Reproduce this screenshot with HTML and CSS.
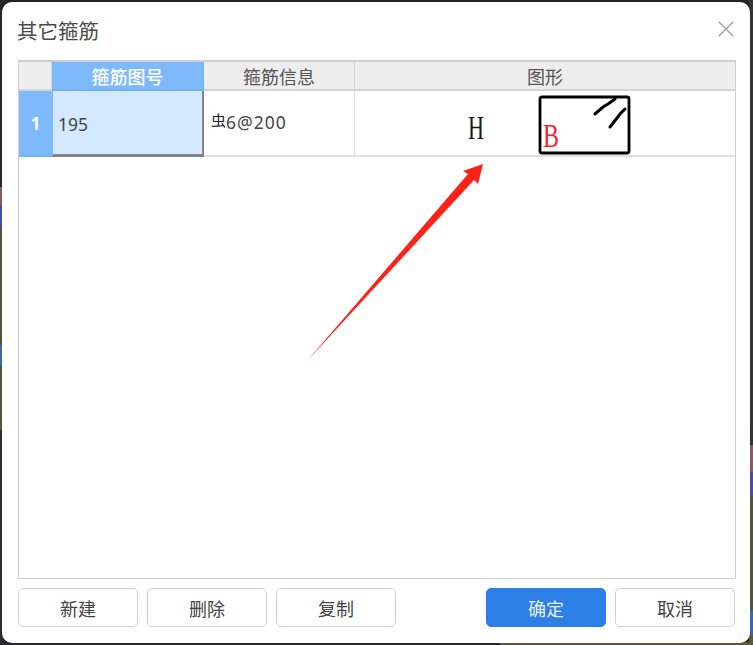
FILE: index.html
```html
<!DOCTYPE html>
<html lang="zh-CN">
<head>
<meta charset="utf-8">
<title>其它箍筋</title>
<link rel="stylesheet" href="styles.css">
</head>
<body>
<main class="dialog">
  <header class="title-bar">
    <h1 class="title">其它箍筋</h1>
    <button class="close" aria-label="关闭">
      <svg width="16" height="16" viewBox="0 0 16 16"><path d="M.7.7 15.3 15.3M15.3.7.7 15.3" fill="none" stroke="#a6a6a6" stroke-width="1.6"/></svg>
    </button>
  </header>
  <section class="table">
    <div class="grid">
      <div class="head corner"></div>
      <div class="head head-active">箍筋图号</div>
      <div class="head">箍筋信息</div>
      <div class="head head-last">图形</div>
      <div class="row-no">1</div>
      <div class="cell cell-active">195</div>
      <div class="cell cell-info"><span class="rebar">虫</span>6@200</div>
      <div class="cell cell-shape">
        <svg class="shape" width="378" height="65" viewBox="0 0 378 65">
          <text class="dim-h" x="113" y="48" textLength="16" lengthAdjust="spacingAndGlyphs">H</text>
          <rect x="185" y="6" width="89" height="56" rx="2" fill="none" stroke="#000" stroke-width="2.8"/>
          <path d="M240 23 248 16 253 13 260 8M255 36 262 27 265 23 270 18" fill="none" stroke="#000" stroke-width="3" stroke-linecap="round"/>
          <text class="dim-b" x="188" y="56" textLength="16" lengthAdjust="spacingAndGlyphs">B</text>
        </svg>
      </div>
    </div>
    <svg class="arrow" width="190" height="210" viewBox="0 0 190 210">
      <path d="M7 202 168 15 163 12 183 5 178 25 174 21Z" fill="#ff2116"/>
    </svg>
  </section>
  <footer class="actions">
    <button class="btn">新建</button>
    <button class="btn">删除</button>
    <button class="btn">复制</button>
    <button class="btn btn-primary">确定</button>
    <button class="btn">取消</button>
  </footer>
</main>
</body>
</html>
```
FILE: styles.css
```css
* { box-sizing: border-box; }
html, body { margin: 0; height: 100%; }
body {
  width: 753px;
  height: 645px;
  overflow: hidden;
  padding: 2px 3px 2px 2px;
  background:
    linear-gradient(#262626 187px, #8a5a5e 187px, #8a5a5e 205px, #4a4aa2 205px, #4a4aa2 228px, #55553a 228px, #55553a 345px, #3a66aa 345px, #3a66aa 365px, #55553a 365px, #55553a 430px, #2a2a2e 430px) left top / 3px 100% no-repeat,
    linear-gradient(90deg, #262626 500px, #5a5a38 500px) left bottom / 100% 3px no-repeat,
    linear-gradient(#333336 445px, #8a5a5e 445px, #8a5a5e 472px, #4a4aa2 472px, #4a4aa2 495px, #55553a 495px, #55553a 610px, #3a66aa 610px, #3a66aa 635px, #5a5a38 635px) right top / 4px 100% no-repeat,
    #262626;
  font-family: "Noto Sans CJK SC", "Noto Sans", sans-serif;
  color: #444;
}
.dialog {
  height: 641px;
  display: flex;
  flex-direction: column;
  background: #fff;
  border-radius: 10px;
  padding: 0 14px 16px 16px;
}
.title-bar {
  height: 58px;
  flex: none;
  display: flex;
  align-items: center;
  justify-content: space-between;
  padding-bottom: 2px;
}
.title {
  margin: 0 0 0 -1px;
  font-size: 20.5px;
  font-weight: 400;
  color: #4a4a4a;
}
.close {
  border: 0;
  background: none;
  padding: 0;
  margin: 0 2px 3px 0;
  width: 16px;
  height: 16px;
  display: block;
}
.close svg { display: block; }
.table {
  position: relative;
  flex: 1;
  border: 1px solid #cfcfcf;
  border-top-width: 2px;
  min-height: 0;
}
.grid {
  display: grid;
  grid-template-columns: 33px 152px 151px 1fr;
  grid-template-rows: 29px 66px;
}
.head {
  display: flex;
  align-items: center;
  justify-content: center;
  background: #eee;
  border-right: 1px solid #d4d4d4;
  border-bottom: 2px solid #d4d4d4;
  font-size: 18px;
  color: #555;
}
.corner { background: #eee; }
.head-last { border-right: 0; }
.head-active {
  background: #7eb9fb;
  color: #fff;
  border-right: 1px solid #6fb0f8;
  border-bottom: 2px solid #6fb0f8;
  font-weight: 500;
}
.row-no {
  display: flex;
  align-items: center;
  justify-content: center;
  background: #7eb9fb;
  color: #fff;
  font-size: 17px;
  font-weight: 700;
  font-family: "Noto Sans", sans-serif;
  border-bottom: 2px solid #6fb0f8;
}
.cell {
  border-right: 1px solid #ddd;
  border-bottom: 2px solid #e2e2e2;
  font-family: "Noto Sans", "Noto Sans CJK SC", sans-serif;
  font-size: 17.5px;
  color: #444;
}
.cell-active {
  background: #d4e8ff;
  border-left: 1px solid #7eb9fb;
  border-right: 2px solid #848484;
  border-bottom: 3px solid #848484;
  padding: 22px 0 0 5px;
  line-height: 22px;
}
.cell-info { padding: 20px 0 0 7px; line-height: 22px; letter-spacing: 1px; }
.rebar { font-family: "Noto Sans CJK SC", sans-serif; font-size: 15px; letter-spacing: 0; color: #222; position: relative; top: -3px; }
.cell-shape { border-right: 0; }
.shape { display: block; }
.dim-h { font-family: "Liberation Serif", serif; font-size: 33px; fill: #1a1a1a; }
.dim-b { font-family: "Liberation Serif", serif; font-size: 33px; fill: #ff2030; }
.arrow {
  position: absolute;
  left: 281px;
  top: 97px;
}
.actions {
  flex: none;
  display: flex;
  gap: 9px;
  margin-top: 9px;
}
.btn {
  width: 120px;
  height: 39px;
  border: 1px solid #d2d2d2;
  border-radius: 5px;
  background: #fff;
  font-family: "Noto Sans CJK SC", sans-serif;
  font-size: 18px;
  color: #444;
  padding: 0;
}
.btn-primary {
  margin-left: 81px;
  background: #2b7fe6;
  border-color: #2b7fe6;
  color: #e8f2ff;
}
```
